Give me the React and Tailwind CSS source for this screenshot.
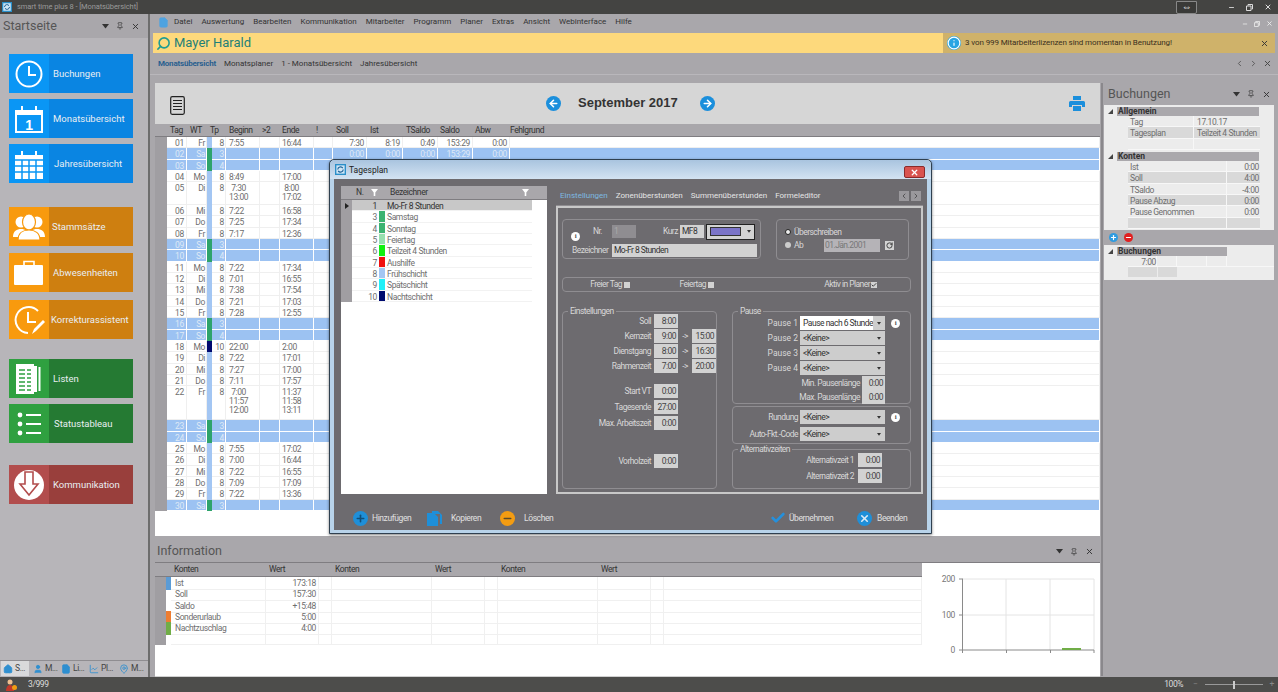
import React from 'react';
import { X, Pin, Home, User, FileText, LineChart, MapPin, ChevronLeft, ChevronRight, Search, ArrowLeft, ArrowRight, Plus, Minus, Check, Info, RotateCw } from 'lucide-react';

const Logo = ({ size = 10 }) => (
    <svg width={size} height={size} viewBox="0 0 12 12" className="shrink-0">
        <rect width="12" height="12" fill="#2a8fc9" />
        <rect x="1.5" y="1.5" width="9" height="9" fill="#cfe6f5" />
        <path d="M3 6a3 3 0 0 1 5.5-1.5M9 6a3 3 0 0 1-5.5 1.5" stroke="#1a5f96" strokeWidth="1.2" fill="none" />
    </svg>
);

const Dropdown = ({ className = 'text-[#333]', w = 7, h = 5 }) => (
    <svg width={w} height={h} viewBox="0 0 7 5" className={className}><path d="M0 0h7L3.5 4.5z" fill="currentColor" /></svg>
);

const PanelControls = () => (
    <div className="flex items-center gap-[7px] text-[#333]">
        <Dropdown />
        <Pin size={8} strokeWidth={2} />
        <X size={9} strokeWidth={2.5} />
    </div>
);

const icons = {
    clock: (
        <svg width="30" height="30" viewBox="0 0 30 30" fill="none" stroke="white">
            <circle cx="15" cy="15" r="12.5" strokeWidth="2" />
            <path d="M15 7v9h7" strokeWidth="2" />
        </svg>
    ),
    month: (
        <svg width="30" height="30" viewBox="0 0 30 30">
            <path d="M1 6h28v23H1z" fill="white" />
            <path d="M3 11h24v16H3z" fill="#0a96f5" />
            <path d="M8 2v7M22 2v7" stroke="white" strokeWidth="2" />
            <text x="15" y="26" textAnchor="middle" fontSize="14" fontWeight="700" fill="white" fontFamily="Liberation Sans">1</text>
        </svg>
    ),
    year: (
        <svg width="30" height="30" viewBox="0 0 30 30">
            <path d="M1 6h28v24H1z" fill="white" />
            <path d="M8 2v7M22 2v7" stroke="white" strokeWidth="2" />
            <path d="M1 11h28M1 17h28M1 23h28M8 11v19M15 11v19M22 11v19" stroke="#0a96f5" strokeWidth="1.5" />
        </svg>
    ),
    people: (
        <svg width="32" height="28" viewBox="0 0 32 28" fill="white">
            <circle cx="8" cy="9" r="5.5" />
            <circle cx="24" cy="9" r="5.5" />
            <path d="M0 24c0-6 4-8 8-8s8 2 8 8zM16 24c0-6 4-8 8-8s8 2 8 8z" />
            <ellipse cx="16" cy="9" rx="6.5" ry="8" stroke="#f89a0e" strokeWidth="1.2" />
            <path d="M5 27c0-7 5-10 11-10s11 3 11 10z" stroke="#f89a0e" strokeWidth="1.2" />
        </svg>
    ),
    case: (
        <svg width="30" height="26" viewBox="0 0 30 26">
            <path d="M10 5V1.500h10V5" stroke="white" strokeWidth="1.6" fill="none" />
            <rect y="5" width="29" height="20" rx="1" fill="white" />
        </svg>
    ),
    fix: (
        <svg width="32" height="32" viewBox="0 0 32 32" fill="none" stroke="white">
            <path d="M25 7A13 13 0 1 0 15 29" strokeWidth="2" />
            <path d="M15 8v10h8" strokeWidth="2" />
            <path d="M19 30l2-5 9-9 2 2-9 9z" fill="white" stroke="none" />
        </svg>
    ),
    list: (
        <svg width="26" height="30" viewBox="0 0 26 30">
            <path d="M18 2h3v26h-3zM22.500 3h2v24h-2z" fill="white" />
            <rect x="0" y="0" width="18" height="30" fill="white" />
            <path d="M3 6h6M11 6h4M3 10h6M11 10h4M3 14h6M11 14h4M3 18h6M11 18h4M3 22h6M11 22h4M3 26h6M11 26h4" stroke="#2fa040" strokeWidth="1.4" />
        </svg>
    ),
    bullets: (
        <svg width="24" height="24" viewBox="0 0 24 24" fill="white">
            <circle cx="3" cy="3" r="2.4" /><circle cx="3" cy="12" r="2.4" /><circle cx="3" cy="21" r="2.4" />
            <path d="M9 2h15v2H9zM9 11h15v2H9zM9 20h15v2H9z" />
        </svg>
    ),
    down: (
        <svg width="30" height="30" viewBox="0 0 30 30">
            <circle cx="15" cy="15" r="15" fill="white" />
            <path d="M11 2v12H6l9 11 9-11h-5V2z" fill="white" stroke="#b24d4d" strokeWidth="1.6" />
        </svg>
    ),
};

const blue = { left: 'bg-[#0a96f5]', right: 'bg-[#0a85e2]' };
const orange = { left: 'bg-[#f89a0e]', right: 'bg-[#ce7f10]' };
const green = { left: 'bg-[#2fa040]', right: 'bg-[#257a33]' };
const red = { left: 'bg-[#b24d4d]', right: 'bg-[#993f3c]' };

const tiles = [
    { label: 'Buchungen', icon: icons.clock, c: blue, mt: 'mt-[16px]' },
    { label: 'Monatsübersicht', icon: icons.month, c: blue, mt: 'mt-[6px]' },
    { label: 'Jahresübersicht', icon: icons.year, c: blue, mt: 'mt-[6px]', pl: 'pl-[5px]' },
    { label: 'Stammsätze', icon: icons.people, c: orange, mt: 'mt-[24px]', pl: 'pl-[3px]' },
    { label: 'Abwesenheiten', icon: icons.case, c: orange, mt: 'mt-[7px]' },
    { label: 'Korrekturassistent', icon: icons.fix, c: orange, mt: 'mt-[8px]', pl: 'pl-[2px]' },
    { label: 'Listen', icon: icons.list, c: green, mt: 'mt-[20px]' },
    { label: 'Statustableau', icon: icons.bullets, c: green, mt: 'mt-[6px]', pl: 'pl-[5px]' },
    { label: 'Kommunikation', icon: icons.down, c: red, mt: 'mt-[22px]' },
];

const Tile = ({ label, icon, c, mt, pl = 'pl-[4px]' }) => (
    <div className={`${mt} mx-[9px] w-[124px] h-[39px] flex shrink-0`}>
        <div className={`${c.left} w-[40px] shrink-0 flex items-center justify-center`}>{icon}</div>
        <div className={`${c.right} flex-1 flex items-center ${pl} pt-[1px] text-[9.5px] tracking-[0px] text-[#e9eef2] whitespace-nowrap`}>{label}</div>
    </div>
);

const Sidebar = () => (
    <div className="w-[148px] shrink-0 flex flex-col bg-[#b7b5b9]">
        <div className="h-[24px] shrink-0 bg-[#a9a7ab] flex items-center justify-between pl-[3px] pr-[8px]">
            <span className="text-[12.5px] tracking-[0px] text-[#555]">Startseite</span>
            <PanelControls />
        </div>
        {tiles.map(t => <Tile key={t.label} {...t} />)}
        <div className="mt-auto mb-[1px] h-[16px] border-t border-[#8f8d91] flex items-center text-[8.5px] text-[#444] pr-[1px]">
            <div className="h-full w-[28px] ml-[1px] bg-[#d9d9db] flex items-center gap-[2px] pl-[2px]"><Home size={10} className="text-[#2f8fd0]" fill="#2f8fd0" />S...</div>
            <div className="flex items-center gap-[2px] ml-[4px] w-[28px]"><User size={10} className="text-[#2f8fd0]" fill="#2f8fd0" />M...</div>
            <div className="flex items-center gap-[2px] w-[28px]"><FileText size={10} className="text-[#2f8fd0]" fill="#2f8fd0" />Li...</div>
            <div className="flex items-center gap-[2px] w-[30px]"><LineChart size={10} className="text-[#2f8fd0]" />Pl...</div>
            <div className="flex items-center gap-[2px]"><MapPin size={10} className="text-[#2f8fd0]" />M...</div>
        </div>
    </div>
);

const menu = ['Datei', 'Auswertung', 'Bearbeiten', 'Kommunikation', 'Mitarbeiter', 'Programm', 'Planer', 'Extras', 'Ansicht', 'Webinterface', 'Hilfe'];

const days = [
    { d: '01', w: 'Fr', b: ['7:55'], e: ['16:44'], rest: ['7:30', '8:19', '0:49', '153:29', '0:00'] },
    { d: '02', w: 'Sa', off: 3, rest: ['0:00', '0:00', '0:00', '153:29', '0:00'] },
    { d: '03', w: 'So', off: 4 },
    { d: '04', w: 'Mo', b: ['8:49'], e: ['17:00'] },
    { d: '05', w: 'Di', b: ['7:30', '13:00'], e: ['8:00', '17:02'] },
    { d: '06', w: 'Mi', b: ['7:22'], e: ['16:58'] },
    { d: '07', w: 'Do', b: ['7:25'], e: ['17:34'] },
    { d: '08', w: 'Fr', b: ['7:17'], e: ['12:36'] },
    { d: '09', w: 'Sa', off: 3 },
    { d: '10', w: 'So', off: 4 },
    { d: '11', w: 'Mo', b: ['7:22'], e: ['17:34'] },
    { d: '12', w: 'Di', b: ['7:01'], e: ['16:55'] },
    { d: '13', w: 'Mi', b: ['7:38'], e: ['17:54'] },
    { d: '14', w: 'Do', b: ['7:21'], e: ['17:03'] },
    { d: '15', w: 'Fr', b: ['7:28'], e: ['12:55'] },
    { d: '16', w: 'Sa', off: 3 },
    { d: '17', w: 'So', off: 4 },
    { d: '18', w: 'Mo', tp: 10, b: ['22:00'], e: ['2:00'] },
    { d: '19', w: 'Di', b: ['7:22'], e: ['17:01'] },
    { d: '20', w: 'Mi', b: ['7:27'], e: ['17:00'] },
    { d: '21', w: 'Do', b: ['7:11'], e: ['17:57'] },
    { d: '22', w: 'Fr', b: ['7:00', '11:57', '12:00'], e: ['11:37', '11:58', '13:11'] },
    { d: '23', w: 'Sa', off: 3 },
    { d: '24', w: 'So', off: 4 },
    { d: '25', w: 'Mo', b: ['7:55'], e: ['17:02'] },
    { d: '26', w: 'Di', b: ['7:00'], e: ['16:44'] },
    { d: '27', w: 'Mi', b: ['7:22'], e: ['16:55'] },
    { d: '28', w: 'Do', b: ['7:09'], e: ['17:09'] },
    { d: '29', w: 'Fr', b: ['7:22'], e: ['13:36'] },
    { d: '30', w: 'Sa', off: 3 },
];

const gridCols = 'grid grid-cols-[20px_20px_5px_14px_34px_20px_34px_19px_34px_36px_35px_35px_37px_1fr]';

const Times = ({ items = [] }) => (
    <div className="flex flex-col items-center w-fit pt-[2px] leading-[8.67px]">
        {items.map(t => <span key={t}>{t}</span>)}
    </div>
);

const DayRow = ({ day }) => {
    const lines = day.b ? day.b.length : 1;
    const height = lines === 1 ? 'h-[11.33px]' : lines === 2 ? 'h-[22.67px]' : 'h-[34px]';
    const tone = day.off ? 'bg-[#9cc2f2] text-[#dfe9f6]' : 'bg-white text-[#6e6e6e]';
    const line = day.off ? 'border-white' : 'border-[#efefef]';
    const colour = day.off ? 'bg-[#2ea36b]' : day.tp === 10 ? 'bg-[#000a6e]' : 'bg-[#a3c6f3]';
    const rest = day.rest || [];
    const cell = `border-r border-b ${line} ${height} leading-[12px]`;
    return (
        <div className={`${gridCols} ${tone} text-[8.5px]`}>
            <div className={`${cell} text-center pl-[6px]`}>{day.d}</div>
            <div className={`${cell} text-right pr-[1px]`}>{day.w}</div>
            <div className={`${colour} ${height}`}></div>
            <div className={`${cell} text-right pr-[1px]`}>{day.off || day.tp || 8}</div>
            <div className={`${cell} pl-[3px]`}><Times items={day.b} /></div>
            <div className={cell}></div>
            <div className={`${cell} pl-[2px]`}><Times items={day.e} /></div>
            <div className={cell}></div>
            {[0, 1, 2, 3, 4].map(i => <div key={i} className={`${cell} text-right pr-[2px]`}>{rest[i]}</div>)}
            <div className={cell}></div>
        </div>
    );
};

const MonthPanel = () => (
    <div className="h-[453px] shrink-0 flex flex-col bg-white">
        <div className="h-[41px] shrink-0 bg-[#d6d6d6] flex items-center justify-between pl-[15px] pr-[15px]">
            <svg width="15" height="19" viewBox="0 0 15 19" fill="none" stroke="#222" className="mt-[3px]">
                <rect x="0.7" y="0.7" width="13.600" height="17.600" rx="1.500" strokeWidth="1.200" />
                <path d="M3 4.500h9M3 7.500h9M3 10.500h9M3 13.500h9" strokeWidth="1.200" />
            </svg>
            <div className="flex items-center ml-[7px] -mt-[1px]">
                <span className="w-[15px] h-[15px] rounded-full bg-[#1b8fdc] flex items-center justify-center"><ArrowLeft size={11} strokeWidth={3.500} className="text-white" /></span>
                <span className="ml-[17px] mr-[22px] w-[100px] text-[13px] font-bold tracking-[0px] whitespace-nowrap text-[#333] font-['Liberation_Sans',sans-serif]">September 2017</span>
                <span className="w-[15px] h-[15px] rounded-full bg-[#1b8fdc] flex items-center justify-center"><ArrowRight size={11} strokeWidth={3.500} className="text-white" /></span>
            </div>
            <svg width="16" height="15" viewBox="0 0 16 15" fill="#1b8fdc">
                <path d="M4 0h8v4H4zM1.500 5h13a1.500 1.500 0 0 1 1.500 1.500V11h-3V9H3v2H0V6.500A1.500 1.500 0 0 1 1.500 5zM4 10h8v5H4z" />
            </svg>
        </div>
        <div className="h-[13px] shrink-0 bg-[#a9a7ab] border-b border-[#7f7d81] pl-[12px] text-[8.5px] text-[#333] leading-[12px]">
            <div className={gridCols}>
                <div className="pl-[3px]">Tag</div>
                <div className="pl-[3px]">WT</div>
                <div className="col-span-2 pl-[3px]">Tp</div>
                <div className="pl-[3px]">Beginn</div>
                <div className="pl-[2px]">&gt;2</div>
                <div className="pl-[2px]">Ende</div>
                <div className="pl-[2px]">!</div>
                <div className="pl-[3px]">Soll</div>
                <div className="pl-[3px]">Ist</div>
                <div className="pl-[3px]">TSaldo</div>
                <div className="pl-[2px]">Saldo</div>
                <div className="pl-[2px]">Abw</div>
                <div className="pl-[0px]">Fehlgrund</div>
            </div>
        </div>
        <div className="flex items-start flex-1">
            <div className="w-[12px] h-[374px] bg-[#a09ea2] shrink-0"></div>
            <div className="flex-1">
                {days.map(day => <DayRow key={day.d} day={day} />)}
            </div>
        </div>
    </div>
);

const konten = [
    { n: 'Ist', v: '173:18', c: 'bg-[#5b9bd5]' },
    { n: 'Soll', v: '157:30' },
    { n: 'Saldo', v: '+15:48' },
    { n: 'Sonderurlaub', v: '5:00', c: 'bg-[#ed7d31]' },
    { n: 'Nachtzuschlag', v: '4:00', c: 'bg-[#70ad47]' },
    { n: '', v: '' },
];

const infoCols = 'grid grid-cols-[5px_95px_53px_13px_100px_53px_13px_100px_53px_13px_1fr]';

const Chart = () => (
    <svg width="165" height="113" viewBox="0 -16 165 113" className="ml-[13px] shrink-0" fontFamily="Roboto" fontSize="8.500" fill="#777">
        <path d="M27 0h132M27 36h132M71 0v71M115 0v71M159 0v71" stroke="#e4e4e4" />
        <path d="M27.500 0v71M24 71h135M24 0h4M24 36h4M71.500 71v3M115.500 71v3M159 71v3M27.500 71v3" stroke="#8a8a8a" fill="none" />
        <rect x="127" y="69" width="19" height="2" fill="#70ad47" />
        <text x="20" y="3" textAnchor="end">200</text>
        <text x="20" y="39" textAnchor="end">100</text>
        <text x="20" y="74" textAnchor="end">0</text>
    </svg>
);

const InfoPanel = () => (
    <div className="mt-[5px] h-[135px] shrink-0 flex flex-col">
        <div className="h-[22px] shrink-0 bg-[#a9a7ab] border-b border-[#7f7d81] flex items-center justify-between pl-[2px] pr-[6px]">
            <span className="text-[12.5px] tracking-[0px] text-[#555]">Information</span>
            <PanelControls />
        </div>
        <div className="flex-1 flex bg-white border-b-2 border-[#d0d0d0]">
            <div className="w-[767px] shrink-0 flex flex-col">
                <div className={`${infoCols} h-[14px] shrink-0 bg-[#a9a7ab] border-b border-[#7f7d81] pl-[11px] text-[8.5px] text-[#333] leading-[13px]`}>
                    <div></div>
                    <div className="pl-[3px]">Konten</div>
                    <div className="pl-[3px]">Wert</div>
                    <div></div>
                    <div className="pl-[3px]">Konten</div>
                    <div className="pl-[3px]">Wert</div>
                    <div></div>
                    <div className="pl-[3px]">Konten</div>
                    <div className="pl-[3px]">Wert</div>
                </div>
                <div className="flex">
                    <div className="w-[11px] bg-[#a09ea2]"></div>
                    <div className="flex-1">
                        {konten.map((k, i) => (
                            <div key={i} className={`${infoCols} h-[11.33px] text-[8.5px] text-[#6e6e6e] leading-[12px]`}>
                                <div className={k.c}></div>
                                <div className="pl-[4px] border-r border-b border-[#f0f0f0]">{k.n}</div>
                                <div className="text-right pr-[2px] border-r border-b border-[#f0f0f0]">{k.v}</div>
                                {[0, 1, 2, 3, 4, 5, 6, 7].map(c => <div key={c} className="border-r border-b border-[#f0f0f0]"></div>)}
                            </div>
                        ))}
                    </div>
                </div>
            </div>
            <Chart />
        </div>
    </div>
);

const allgemein = [
    { k: 'Tag', v: '17.10.17' },
    { k: 'Tagesplan', v: 'Teilzeit 4 Stunden', alt: true },
    { k: '', v: '' },
];
const kontenSide = [
    { k: 'Ist', v: '0:00' },
    { k: 'Soll', v: '4:00', alt: true },
    { k: 'TSaldo', v: '-4:00' },
    { k: 'Pause Abzug', v: '0:00', alt: true },
    { k: 'Pause Genommen', v: '0:00' },
    { k: '', v: '', alt: true },
];

const SideHeader = ({ label, w }) => (
    <div className="flex items-center h-[9px] mt-[2px]">
        <svg width="5" height="5" viewBox="0 0 5 5" className="ml-[4px] mr-[4px]"><path d="M5 0v5H0z" fill="#444" /></svg>
        <div className={`${w} bg-[#aaa8ac] text-[8.5px] font-bold tracking-[0px] text-[#333] leading-[9px] pl-[1px]`}>{label}</div>
    </div>
);

const BookingsPanel = () => (
    <div className="w-[170px] shrink-0 ml-[1px] flex flex-col bg-[#a9a7ab]">
        <div className="h-[22px] shrink-0 flex items-center justify-between pl-[4px] pr-[3px]">
            <span className="text-[12.5px] tracking-[0px] text-[#555]">Buchungen</span>
            <PanelControls />
        </div>
        <div className="h-[125px] shrink-0 bg-[#ececec] text-[8.5px] text-[#6e6e6e]">
            <SideHeader label="Allgemein" w="w-[142px]" />
            <div>
                {allgemein.map((r, i) => (
                    <div key={i} className={`ml-[24px] w-[132px] h-[11.33px] flex leading-[12px] border-b border-[#f7f7f7] ${r.alt ? 'bg-[#d9d9d9]' : ''}`}>
                        <div className="w-[66px] pl-[2px] border-r border-[#f7f7f7]">{r.k}</div>
                        <div className="pl-[3px] whitespace-nowrap">{r.v}</div>
                    </div>
                ))}
            </div>
            <SideHeader label="Konten" w="w-[142px]" />
            <div>
                {kontenSide.map((r, i) => (
                    <div key={i} className={`ml-[24px] w-[132px] h-[11.33px] flex leading-[12px] border-b border-[#f7f7f7] ${r.alt ? 'bg-[#d9d9d9]' : ''}`}>
                        <div className="w-[99px] pl-[2px] border-r border-[#f7f7f7]">{r.k}</div>
                        <div className="flex-1 text-right pr-[1px]">{r.v}</div>
                    </div>
                ))}
            </div>
        </div>
        <div className="h-[15px] shrink-0 flex items-center gap-[6px] pl-[5px]">
            <span className="w-[9px] h-[9px] rounded-full bg-[#2f9be0] flex items-center justify-center"><Plus size={7} strokeWidth={4} className="text-white" /></span>
            <span className="w-[9px] h-[9px] rounded-full bg-[#e02020] flex items-center justify-center"><Minus size={7} strokeWidth={4} className="text-white" /></span>
        </div>
        <div className="h-[35px] shrink-0 bg-[#ececec] text-[8.5px] text-[#6e6e6e]">
            <SideHeader label="Buchungen" w="w-[110px]" />
            <div className="ml-[24px] flex h-[11.33px] leading-[12px] border-b border-[#f7f7f7]">
                <div className="w-[29px] text-right border-r border-[#f7f7f7]">7:00</div>
                <div className="w-[20px] border-r border-[#f7f7f7]"></div>
                <div className="w-[30px] border-r border-[#f7f7f7]"></div>
                <div className="w-[20px] border-r border-[#f7f7f7]"></div>
            </div>
            <div className="ml-[24px] flex h-[10px]">
                <div className="w-[29px] bg-[#d9d9d9] mr-[1px]"></div>
                <div className="w-[19px] bg-[#d9d9d9]"></div>
            </div>
        </div>
    </div>
);

const plans = [
    { n: 1, name: 'Mo-Fr 8 Stunden', c: 'bg-[#c8c8c8]', sel: true },
    { n: 3, name: 'Samstag', c: 'bg-[#3cb371]' },
    { n: 4, name: 'Sonntag', c: 'bg-[#3cb371]' },
    { n: 5, name: 'Feiertag', c: 'bg-[#98e0b0]' },
    { n: 6, name: 'Teilzeit 4 Stunden', c: 'bg-[#10f010]' },
    { n: 7, name: 'Aushilfe', c: 'bg-[#f01010]' },
    { n: 8, name: 'Frühschicht', c: 'bg-[#a3c6f3]' },
    { n: 9, name: 'Spätschicht', c: 'bg-[#20f0f8]' },
    { n: 10, name: 'Nachtschicht', c: 'bg-[#000a6e]' },
];

const PlanList = () => (
    <div className="w-[206px] h-[308px] shrink-0 bg-white flex flex-col">
        <div className="h-[14px] shrink-0 bg-[#a9a7ab] border-b border-[#7f7d81] flex items-center text-[8.5px] text-[#333]">
            <span className="ml-[15px] w-[8px]">N.</span>
            <svg width="7" height="7" viewBox="0 0 7 7" className="ml-[7px]"><path d="M0 0h7L4.300 3.500V7H2.700V3.500z" fill="white" /></svg>
            <span className="ml-[12px]">Bezeichner</span>
            <svg width="7" height="7" viewBox="0 0 7 7" className="ml-auto mr-[18px]"><path d="M0 0h7L4.300 3.500V7H2.700V3.500z" fill="white" /></svg>
        </div>
        <div className="flex items-start">
            <div className="w-[11px] h-[102px] bg-[#a09ea2] shrink-0 pt-[3px] pl-[4px]">
                <svg width="4" height="6" viewBox="0 0 4 6"><path d="M0 0l4 3-4 3z" fill="#222" /></svg>
            </div>
            <div className="w-[180px]">
                {plans.map(p => (
                    <div key={p.n} className={`h-[11.33px] flex text-[8.5px] leading-[12px] border-b border-[#f2f2f2] ${p.sel ? 'bg-[#c8c8c8] text-[#333]' : 'text-[#6e6e6e]'}`}>
                        <div className="w-[26px] text-right pr-[1px]">{p.n}</div>
                        <div className={`w-[6px] ml-[1px] ${p.c}`}></div>
                        <div className="pl-[2px] whitespace-nowrap">{p.name}</div>
                    </div>
                ))}
            </div>
        </div>
    </div>
);

const Field = ({ children, className = 'w-[24px]' }) => (
    <div className={`${className} h-[14px] bg-[#d2d2d2] text-[#444] text-right pr-[2px] leading-[14px] text-[8.5px] shrink-0`}>{children}</div>
);

const Select = ({ value = '<Keine>', active }) => (
    <div className="w-[85px] h-[14px] bg-[#cdcdcd] flex items-center text-[8.5px] tracking-[-0.5px] text-[#333] shrink-0">
        <span className={`h-full leading-[14px] pl-[3px] overflow-hidden whitespace-nowrap ${active ? 'bg-white w-[73px]' : 'flex-1'}`}>{value}</span>
        <span className="ml-auto mr-[4px] flex"><Dropdown w={4} h={3} /></span>
    </div>
);

const InfoDot = ({ className = '' }) => (
    <span className={`w-[9px] h-[9px] rounded-full bg-white flex items-center justify-center text-[#555] text-[7px] font-bold leading-none shrink-0 font-['Liberation_Serif',serif] ${className}`}>i</span>
);

const TimeRow = ({ label, a, b, mt = 'mt-[1px]' }) => (
    <div className={`${mt} h-[14px] flex items-center`}>
        <span className="w-[91px] text-right pr-[3px]">{label}</span>
        <Field>{a}</Field>
        {b && <span className="w-[14px] text-center">-&gt;</span>}
        {b && <Field>{b}</Field>}
    </div>
);

const Group = ({ legend, className, children }) => (
    <fieldset className={`min-w-0 border border-[#8f8d91] rounded-[4px] text-[#d8d8d8] ${className}`}>
        {legend && <legend className="ml-[5px] px-[2px] leading-[9px]">{legend}</legend>}
        {children}
    </fieldset>
);

const DialogForm = () => (
    <div className="w-[367px] shrink-0 ml-[9px] flex flex-col text-[8.5px] tracking-[-0.55px]">
        <div className="h-[20px] shrink-0 flex items-center justify-between pl-[4px] pr-[2px] border-b border-[#8f8d91] text-[8px] tracking-[0px] text-[#e5e5e5]">
            <div className="flex gap-[8px]">
                <span className="text-[#7db9e0]">Einstellungen</span>
                <span>Zonenüberstunden</span>
                <span>Summenüberstunden</span>
                <span>Formeleditor</span>
            </div>
            <div className="flex gap-[2px]">
                <span className="w-[10px] h-[10px] bg-[#9a989c] flex items-center justify-center"><ChevronLeft size={8} className="text-[#333]" /></span>
                <span className="w-[10px] h-[10px] bg-[#9a989c] flex items-center justify-center"><ChevronRight size={8} className="text-[#333]" /></span>
            </div>
        </div>
        <div className="h-[288px] border-2 border-[#c8c8c8] pl-[4px] pt-[11px]">
            <div className="flex">
                <Group className="w-[199px] h-[40px] pl-[7px] pt-[4px]">
                    <div className="flex items-center h-[15px]">
                        <InfoDot className="ml-[1px] mt-[10px]" />
                        <span className="ml-[13px] w-[19px]">Nr.</span>
                        <div className="w-[24px] h-[13px] bg-[#8f8d91] text-[#aaa] pl-[2px] leading-[13px]">1</div>
                        <span className="ml-[27px] w-[17px]">Kurz</span>
                        <div className="w-[24px] h-[13px] bg-[#d2d2d2] text-[#333] pl-[2px] leading-[13px]">MF8</div>
                        <div className="ml-[2px] w-[49px] h-[16px] bg-[#d2d2d2] border border-[#222] flex items-center pl-[3px]">
                            <span className="w-[31px] h-[9px] bg-[#7b74c8] border border-[#333]"></span>
                            <span className="ml-[6px] flex"><Dropdown w={4} h={3} /></span>
                        </div>
                    </div>
                    <div className="flex items-center h-[14px] mt-[4px] -ml-[7px]">
                        <span className="w-[49px] pl-[9px]">Bezeichner</span>
                        <div className="w-[145px] h-[13px] bg-[#d2d2d2] text-[#333] pl-[2px] leading-[13px]">Mo-Fr 8 Stunden</div>
                    </div>
                </Group>
                <Group className="ml-[15px] w-[133px] h-[41px] pl-[8px] pt-[6px]">
                    <div className="flex items-center h-[12px] gap-[3px]">
                        <span className="w-[6px] h-[6px] rounded-full bg-[#eee] border border-[#222]"></span>
                        Überschreiben
                    </div>
                    <div className="flex items-center h-[14px] gap-[3px]">
                        <span className="w-[6px] h-[6px] rounded-full bg-[#ccc]"></span>
                        <span className="w-[27px]">Ab</span>
                        <div className="w-[56px] h-[13px] bg-[#b5b3b7] text-[#777] pl-[1px] leading-[13px]">01.Jän.2001</div>
                        <span className="ml-[2px] w-[9px] h-[9px] bg-[#d2d2d2] flex items-center justify-center"><RotateCw size={7} strokeWidth={3} className="text-[#333]" /></span>
                    </div>
                </Group>
            </div>
            <Group className="mt-[17px] w-[349px] h-[15px] flex items-center">
                <span className="ml-[24px] w-[35px] text-right">Freier Tag</span>
                <span className="ml-[2px] w-[6px] h-[6px] bg-[#d2d2d2]"></span>
                <span className="ml-[40px] w-[36px] text-right">Feiertag</span>
                <span className="ml-[2px] w-[6px] h-[6px] bg-[#d2d2d2]"></span>
                <span className="ml-[96px] w-[60px] text-right">Aktiv in Planer</span>
                <span className="ml-[1px] w-[6px] h-[6px] bg-[#d2d2d2] flex items-center justify-center"><Check size={6} strokeWidth={4} className="text-[#444]" /></span>
            </Group>
            <div className="flex mt-[15px]">
                <Group legend="Einstellungen" className="w-[155px] h-[182px]">
                    <TimeRow label="Soll" a="8:00" mt="-mt-[2px]" />
                    <TimeRow label="Kernzeit" a="9:00" b="15:00" />
                    <TimeRow label="Dienstgang" a="8:00" b="16:30" />
                    <TimeRow label="Rahmenzeit" a="7:00" b="20:00" />
                    <TimeRow label="Start VT" a="0:00" mt="mt-[11px]" />
                    <TimeRow label="Tagesende" a="27:00" mt="mt-[2px]" />
                    <TimeRow label="Max. Arbeitszeit" a="0:00" mt="mt-[2px]" />
                    <TimeRow label="Vorholzeit" a="0:00" mt="mt-[24px]" />
                </Group>
                <div className="ml-[15px] w-[179px] flex flex-col">
                    <Group legend="Pause" className="h-[97px]">
                        {['Pause 1', 'Pause 2', 'Pause 3', 'Pause 4'].map((p, i) => (
                            <div key={p} className={`flex items-center h-[14px] ${i === 0 ? '' : 'mt-[1px]'}`}>
                                <span className="w-[67px] text-right pr-[2px] tracking-[0px]">{p}</span>
                                <Select value={i === 0 ? 'Pause nach 6 Stunden' : '<Keine>'} active={i === 0} />
                                {i === 0 && <InfoDot className="ml-[6px]" />}
                            </div>
                        ))}
                        <div className="flex items-center justify-end h-[14px] mt-[1px] pr-[25px]">
                            <span className="pr-[2px]">Min. Pausenlänge</span><Field className="w-[23px]">0:00</Field>
                        </div>
                        <div className="flex items-center justify-end h-[14px] pr-[25px]">
                            <span className="pr-[2px]">Max. Pausenlänge</span><Field className="w-[23px]">0:00</Field>
                        </div>
                    </Group>
                    <Group className="mt-[2px] h-[38px] pt-[3px]">
                        <div className="flex items-center h-[14px]">
                            <span className="w-[67px] text-right pr-[2px]">Rundung</span>
                            <Select />
                            <InfoDot className="ml-[6px]" />
                        </div>
                        <div className="flex items-center h-[14px] mt-[3px]">
                            <span className="w-[67px] text-right pr-[2px]">Auto-Fkt.-Code</span>
                            <Select />
                        </div>
                    </Group>
                    <Group legend="Alternativzeiten" className="mt-[1px] h-[44px]">
                        <div className="flex items-center justify-end h-[14px] -mt-[1px] pr-[28px]">
                            <span className="pr-[4px]">Alternativzeit 1</span><Field>0:00</Field>
                        </div>
                        <div className="flex items-center justify-end h-[14px] mt-[2px] pr-[28px]">
                            <span className="pr-[4px]">Alternativzeit 2</span><Field>0:00</Field>
                        </div>
                    </Group>
                </div>
            </div>
        </div>
    </div>
);

const Tagesplan = () => (
    <div className="absolute left-[329px] top-[159px] w-[603px] h-[375px] border border-[#2f4050] rounded-t-[5px] bg-[#b8d3ea] flex flex-col px-[4px] pb-[3px] shadow-[0_1px_3px_rgba(0,0,0,0.5)]">
        <div className="h-[19px] shrink-0 flex items-start -mx-[4px] px-[5px] pt-[4px] rounded-t-[5px] bg-gradient-to-b from-[#a9c4df] to-[#d3e3f2]">
            <Logo size={11} />
            <span className="ml-[3px] text-[8.5px] tracking-[0px] text-[#222] leading-[13px]">Tagesplan</span>
            <span className="ml-auto mt-[2px] mr-[1px] w-[21px] h-[12px] rounded-[2px] bg-[#d9534f] border border-[#8a2a2a] flex items-center justify-center"><X size={9} strokeWidth={3.500} className="text-white" /></span>
        </div>
        <div className="flex-1 bg-[#6d6b6f] flex flex-col pt-[7px] pl-[7px]">
            <div className="flex">
                <PlanList />
                <DialogForm />
            </div>
            <div className="flex-1 flex items-center pt-[12px] text-[8.5px] text-[#e0e0e0] pl-[12px] pr-[21px]">
                <span className="w-[15px] h-[15px] rounded-full bg-[#1f8fd8] flex items-center justify-center"><Plus size={11} strokeWidth={3.500} className="text-[#114f7a]" /></span>
                <span className="ml-[4px] w-[38px]">Hinzufügen</span>
                <svg width="15" height="15" viewBox="0 0 15 15" className="ml-[17px]"><path d="M5 0h6l4 4v9h-2V3H5zM0 2h7l4 4v9H0z" fill="#1f8fd8" /></svg>
                <span className="ml-[9px] w-[28px]">Kopieren</span>
                <span className="ml-[21px] w-[15px] h-[15px] rounded-full bg-[#f39c12] flex items-center justify-center"><Minus size={11} strokeWidth={3.500} className="text-[#5a4a2a]" /></span>
                <span className="ml-[9px]">Löschen</span>
                <Check size={16} strokeWidth={4} className="ml-auto text-[#2590dc]" />
                <span className="ml-[3px] w-[42px]">Übernehmen</span>
                <span className="ml-[26px] w-[15px] h-[15px] rounded-full bg-[#1f8fd8] flex items-center justify-center"><X size={11} strokeWidth={3.500} className="text-[#dceaf5]" /></span>
                <span className="ml-[5px] w-[29px]">Beenden</span>
            </div>
        </div>
    </div>
);

export default function App() {
    return (
        <div className="relative w-[1278px] h-[692px] overflow-hidden flex flex-col bg-[#a9a7ab] tracking-[-0.4px] font-['Roboto',sans-serif]">
            <div className="h-[14px] shrink-0 bg-[#444442] flex items-center pl-[2px] pr-[6px]">
                <Logo />
                <span className="ml-[5px] text-[7.5px] tracking-[-0.1px] text-[#9a9a9a]">smart time plus 8 - [Monatsübersicht]</span>
                <span className="ml-auto w-[21px] h-[13px] border border-[#888] rounded-b-[2px] bg-[#3a3a38] flex items-center justify-center text-white text-[10px] leading-none">⇔</span>
                <div className="ml-[31px] flex items-center gap-[11px] text-[#ddd]">
                    <Minus size={7} strokeWidth={3} />
                    <svg width="7" height="7" viewBox="0 0 7 7" fill="none" stroke="currentColor"><path d="M2 1.500V.5h4.500v4.500H5.500M.5 2h4.500v4.500H.5z" /></svg>
                    <X size={8} strokeWidth={3} />
                </div>
            </div>
            <div className="flex-1 flex min-h-0">
                <Sidebar />
                <div className="w-[2px] shrink-0 bg-[#6d6d6d]"></div>
                <div className="flex-1 flex flex-col">
                    <div className="h-[19px] shrink-0 flex items-center pl-[8px] text-[8px] tracking-[0px] text-[#333]">
                        <FileText size={11} className="text-[#4fa3e0] -mt-[3px]" fill="#4fa3e0" />
                        <div className="ml-[5px] -mt-[3px] flex gap-[9px] whitespace-nowrap">
                            {menu.map(m => <span key={m}>{m}</span>)}
                        </div>
                        <div className="ml-auto mr-[5px] flex items-center gap-[6px] text-[#eee]">
                            <Minus size={6} strokeWidth={3} />
                            <svg width="6" height="6" viewBox="0 0 7 7" fill="none" stroke="currentColor"><path d="M2 1.500V.5h4.500v4.500H5.500M.5 2h4.500v4.500H.5z" /></svg>
                            <X size={7} strokeWidth={3} />
                        </div>
                    </div>
                    <div className="h-[20px] shrink-0 ml-[3px] mr-[3px] flex bg-[#fdd97c]">
                        <div className="w-[790px] flex items-center pl-[3px]">
                            <Search size={15} strokeWidth={2.500} className="text-[#1e9c93] -scale-x-100" />
                            <span className="ml-[3px] text-[13px] tracking-[0px] text-[#1f7f78]">Mayer Harald</span>
                        </div>
                        <div className="flex-1 bg-[#cfb26a] flex items-center pl-[4px] pr-[6px] text-[8px] tracking-[-0.1px] text-[#3a3020]">
                            <span className="w-[14px] h-[14px] rounded-full bg-[#29a5e3]"><Info size={14} className="text-white" /></span>
                            <span className="ml-[4px]">3 von 999 Mitarbeiterlizenzen sind momentan in Benutzung!</span>
                            <X size={9} strokeWidth={2.500} className="ml-auto text-[#333]" />
                        </div>
                    </div>
                    <div className="h-[22px] shrink-0 flex items-center pl-[8px] pr-[6px] border-b border-[#b9b7bb] text-[8px] tracking-[0px] text-[#333]">
                        <span className="font-bold tracking-[-0.2px] text-[#2a5f8f]">Monatsübersicht</span>
                        <span className="ml-[8px]">Monatsplaner</span>
                        <span className="ml-[8px]">1 - Monatsübersicht</span>
                        <span className="ml-[8px]">Jahresübersicht</span>
                        <div className="ml-auto flex gap-[5px] items-center text-[#444]">
                            <ChevronLeft size={9} />
                            <ChevronRight size={9} />
                            <X size={9} strokeWidth={2.500} />
                        </div>
                    </div>
                    <div className="flex-1 flex pt-[8px] pl-[5px]">
                        <div className="w-[945px] shrink-0 flex flex-col">
                            <MonthPanel />
                            <InfoPanel />
                        </div>
                        <div className="w-[2px] ml-[1px] shrink-0 bg-[#8a888c] h-[593px]"></div>
                        <BookingsPanel />
                    </div>
                </div>
            </div>
            <div className="h-[15px] shrink-0 bg-[#4d4d4b] flex items-center pl-[6px] pr-[4px] text-[8.5px] text-[#ddd]">
                <svg width="11" height="12" viewBox="0 0 11 12"><circle cx="4" cy="3" r="2.500" fill="#f0c090" /><path d="M0 12c0-4 2-6 4-6s4 2 4 6z" fill="#c0392b" /><circle cx="8.500" cy="8.500" r="2.500" fill="#f39c12" /></svg>
                <span className="ml-[11px]">3/999</span>
                <span className="ml-auto">100%</span>
                <span className="ml-[10px] text-[#888]">−</span>
                <div className="ml-[7px] w-[58px] h-[1px] bg-[#999] flex justify-center items-center">
                    <span className="w-[2px] h-[8px] bg-[#ccc]"></span>
                </div>
                <span className="ml-[7px] text-[#888]">+</span>
            </div>
            <Tagesplan />
        </div>
    );
}
